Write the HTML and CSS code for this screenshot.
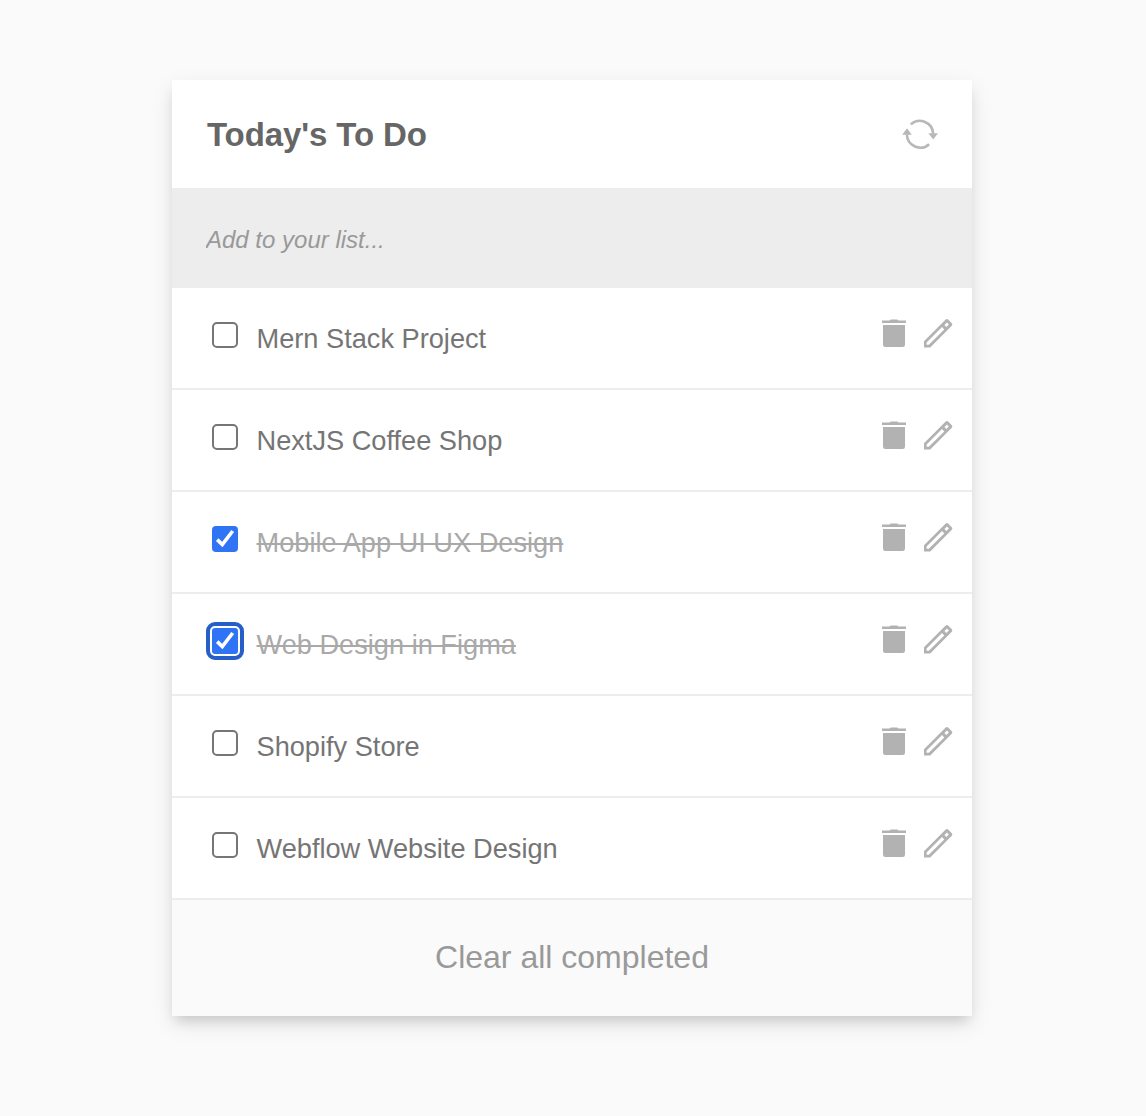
FILE: index.html
```html
<!DOCTYPE html>
<html lang="en">
<head>
<meta charset="utf-8">
<title>Today's To Do</title>
<link rel="stylesheet" href="styles.css">
</head>
<body>
<svg class="defs" aria-hidden="true">
  <symbol id="trash" viewBox="0 0 24 28"><path d="M0 1.600h7.400L8.800.6h6.400l1.400 1H24v2.400H0zM1 6h22v19.800q0 2.200-2.200 2.200H3.200q-2.200 0-2.200-2.200z"/></symbol>
  <symbol id="pencil" viewBox="0 0 30 30"><path fill-rule="evenodd" d="M1 29.400v-6.200L22.700 1.600q1.200-1.200 2.400 0l3.700 3.700q1.200 1.200 0 2.400L7.200 29.400zM3.600 26.800h2.200L21.300 11.400l-2.300-2.300L3.600 24.400zM23.300 9l2.600-2.600-1.900-1.900-2.600 2.600z"/></symbol>
</svg>
<main class="card">
  <header class="header">
    <h1 class="title">Today's To Do</h1>
    <svg class="refresh" viewBox="0 0 36 32" aria-label="Refresh">
      <path class="arc" d="M8.800 6.400A13.400 13.400 0 0 1 31.200 15.800M27.200 26.200A13.400 13.400 0 0 1 4.900 16.500"/>
      <path d="M26.400 15.200h9.600l-4.800 6.300zM.2 16.800h9.600L5 10.200z"/>
    </svg>
  </header>
  <div class="entry"><input class="field" type="text" placeholder="Add to your list..."></div>
  <ul class="list">
    <li class="item"><span class="box"></span><span class="label">Mern Stack Project</span><svg class="trash"><use href="#trash"/></svg><svg class="pencil"><use href="#pencil"/></svg></li>
    <li class="item"><span class="box"></span><span class="label">NextJS Coffee Shop</span><svg class="trash"><use href="#trash"/></svg><svg class="pencil"><use href="#pencil"/></svg></li>
    <li class="item done"><span class="box"><svg class="check" viewBox="0 0 26 26"><path d="M5.200 13.600l5.100 5L20.700 5"/></svg></span><span class="label">Mobile App UI UX Design</span><svg class="trash"><use href="#trash"/></svg><svg class="pencil"><use href="#pencil"/></svg></li>
    <li class="item done focused"><span class="box"><svg class="check" viewBox="0 0 26 26"><path d="M5.200 13.600l5.100 5L20.700 5"/></svg></span><span class="label">Web Design in Figma</span><svg class="trash"><use href="#trash"/></svg><svg class="pencil"><use href="#pencil"/></svg></li>
    <li class="item"><span class="box"></span><span class="label">Shopify Store</span><svg class="trash"><use href="#trash"/></svg><svg class="pencil"><use href="#pencil"/></svg></li>
    <li class="item"><span class="box"></span><span class="label">Webflow Website Design</span><svg class="trash"><use href="#trash"/></svg><svg class="pencil"><use href="#pencil"/></svg></li>
  </ul>
  <button class="clear" type="button">Clear all completed</button>
</main>
</body>
</html>
```
FILE: styles.css
```css
* { box-sizing: border-box; }
body {
  margin: 0;
  min-height: 1116px;
  padding: 80px 0 0 172px;
  background: #fafafa;
  font-family: "Liberation Sans", Arial, sans-serif;
}
.defs { display: none; }
.card {
  width: 800px;
  background: #fff;
  box-shadow: 0 8px 12px -4px rgba(0, 0, 0, .13), 0 8px 20px rgba(0, 0, 0, .1);
}
.header {
  display: flex;
  align-items: center;
  justify-content: space-between;
  height: 108px;
  padding: 0 34px 0 35px;
}
.title { margin: 2px 0 0; font-size: 33px; line-height: 40px; letter-spacing: -.1px; color: #666; }
.refresh { width: 36px; height: 32px; fill: #b8b8b8; }
.arc { fill: none; stroke: #b8b8b8; stroke-width: 2.600; }
.entry { display: flex; height: 100px; background: #ededed; }
.field {
  flex: 1;
  padding: 4px 34px 0;
  border: 0;
  outline: 0;
  background: transparent;
  font: italic 24px "Liberation Sans", Arial, sans-serif;
}
.field::placeholder { color: #999; opacity: 1; }
.list { margin: 0; padding: 0; list-style: none; }
.item {
  display: flex;
  align-items: flex-start;
  height: 102px;
  padding: 0 19px 0 40px;
  border-bottom: 2px solid #ededed;
}
.box {
  width: 26px;
  height: 26px;
  margin-top: 34px;
  border: 2px solid #767676;
  border-radius: 5px;
}
.label {
  flex: 1;
  margin: 36px 0 0 18.500px;
  font-size: 27.200px;
  line-height: 30px;
  color: #757575;
}
.trash { width: 24px; height: 28px; margin: 31px 17px 0 0; fill: #b2b2b2; }
.pencil { width: 30px; height: 30px; margin-top: 30px; fill: #b2b2b2; }
.done .box { border: 0; border-radius: 4px; background: #3074f6; }
.done .label { color: #a9a9a9; text-decoration: line-through; text-decoration-thickness: 2px; }
.focused .box { border-radius: 3px; outline: 4px solid #275fc8; outline-offset: 2px; }
.check { display: block; fill: none; stroke: #fff; stroke-width: 3.600; }
.clear {
  display: block;
  width: 100%;
  height: 116px;
  padding: 0 0 2px;
  border: 0;
  background: #fafafa;
  font: 32px "Liberation Sans", Arial, sans-serif;
  color: #999;
}
```
